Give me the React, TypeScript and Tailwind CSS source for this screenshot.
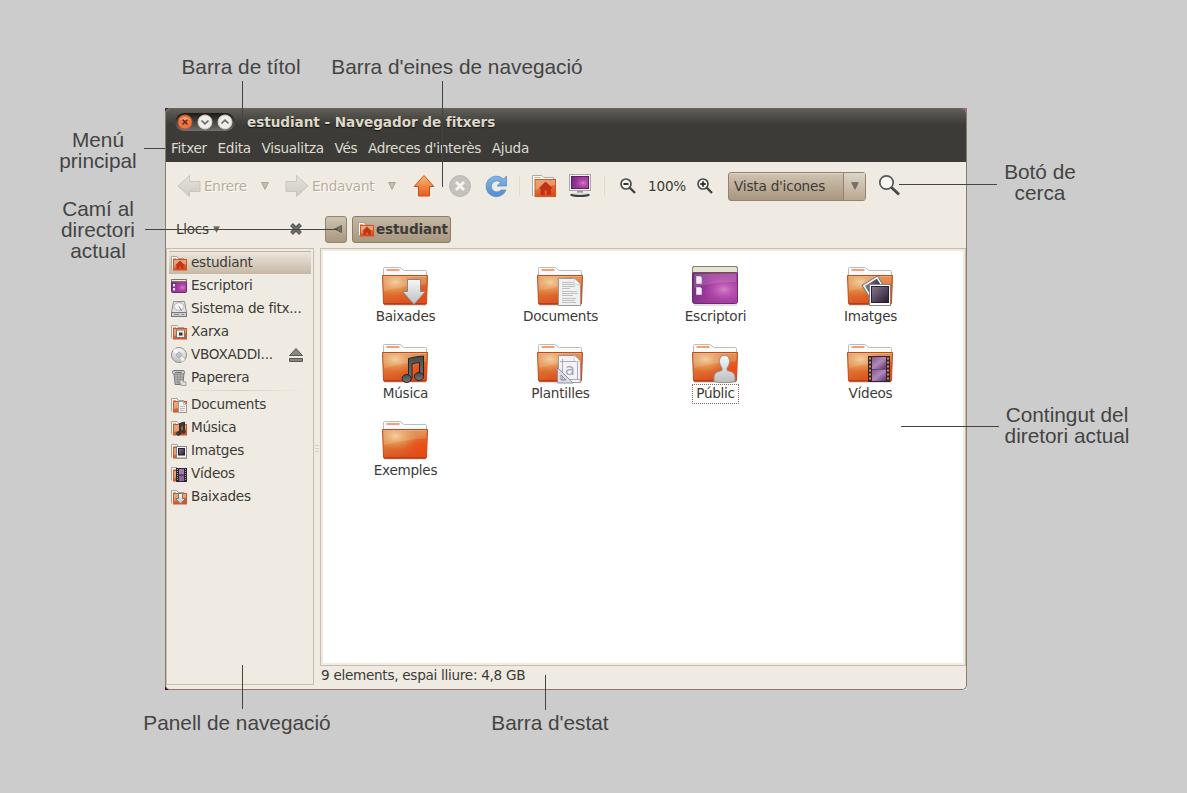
import React from "react";

type Kind =
  | "plain" | "download" | "document" | "desktop" | "images" | "music" | "template" | "public" | "video";

function Defs() {
  return (
    <svg className="absolute h-0 w-0" aria-hidden="true">
      <defs>
        <linearGradient id="front" x1="0" y1="0" x2="0.35" y2="1">
          <stop offset="0" stopColor="#dd8a48" />
          <stop offset="0.5" stopColor="#de7835" />
          <stop offset="1" stopColor="#dc4f1e" />
        </linearGradient>
        <radialGradient id="glow" cx="0.28" cy="0.22" r="0.5">
          <stop offset="0" stopColor="#f3d199" stopOpacity="0.9" />
          <stop offset="1" stopColor="#e59a50" stopOpacity="0" />
        </radialGradient>
        <radialGradient id="hot" cx="0.95" cy="0.65" r="0.5">
          <stop offset="0" stopColor="#ee4a16" />
          <stop offset="1" stopColor="#ee4a16" stopOpacity="0" />
        </radialGradient>
        <linearGradient id="grey" x1="0" y1="0" x2="0" y2="1">
          <stop offset="0" stopColor="#f8f8f8" />
          <stop offset="1" stopColor="#bdbdbd" />
        </linearGradient>
        <linearGradient id="mag" x1="0" y1="0" x2="1" y2="0.2">
          <stop offset="0" stopColor="#6c2a80" />
          <stop offset="0.5" stopColor="#a03a9c" />
          <stop offset="1" stopColor="#a63fa3" />
        </linearGradient>
        <radialGradient id="magGlow" cx="0.7" cy="0.55" r="0.5">
          <stop offset="0" stopColor="#d583c6" />
          <stop offset="1" stopColor="#b13aa8" stopOpacity="0" />
        </radialGradient>
        <linearGradient id="dark" x1="0" y1="0" x2="1" y2="1">
          <stop offset="0" stopColor="#8b7a90" />
          <stop offset="1" stopColor="#241a2c" />
        </linearGradient>
        <linearGradient id="film" x1="0" y1="0" x2="1" y2="1">
          <stop offset="0" stopColor="#7e5b8c" />
          <stop offset="0.5" stopColor="#b287b8" />
          <stop offset="1" stopColor="#5c3274" />
        </linearGradient>
        <linearGradient id="note" x1="0" y1="0" x2="0" y2="1">
          <stop offset="0" stopColor="#4a4a4a" />
          <stop offset="1" stopColor="#777" />
        </linearGradient>
        <linearGradient id="up" x1="0" y1="0" x2="0" y2="1">
          <stop offset="0" stopColor="#f3bd7b" />
          <stop offset="0.5" stopColor="#ef8a45" />
          <stop offset="1" stopColor="#ee5a1d" />
        </linearGradient>
        <linearGradient id="blue" x1="0" y1="0" x2="0" y2="1">
          <stop offset="0" stopColor="#86b5e0" />
          <stop offset="1" stopColor="#4f8fce" />
        </linearGradient>
        <linearGradient id="nav" x1="0" y1="0" x2="0" y2="1">
          <stop offset="0" stopColor="#e6e3dd" />
          <stop offset="1" stopColor="#cdcac4" />
        </linearGradient>
      </defs>
    </svg>
  );
}

function Overlay({ kind }: { kind: Kind }) {
  switch (kind) {
    case "download":
      return <path d="M26.5 14.5h13v12h5L33 39.5 21.5 26.5h5z" fill="url(#grey)" stroke="#868686" />;
    case "document":
      return (
        <g>
          <path d="M22.5 13.5h16l6 6v21h-22z" fill="#f0f0f0" stroke="#999" />
          <path d="M38.5 13.5l-.6 5.6 6.6.4z" fill="#fff" stroke="#bbb" strokeWidth=".7" />
          <path d="M26 17.5h11M26 19.5h12M26 21.5h13M26 23.5h8M26 26.5h15M26 28.5h16M26 30.5h11M26 33.5h14M26 35.5h13M26 37.5h14" stroke="#c0c0c0" />
        </g>
      );
    case "images":
      return (
        <g>
          <g transform="rotate(-32 26 22)">
            <rect x="18.5" y="15.5" width="18" height="17" fill="#f7f7f7" stroke="#777" />
            <rect x="20.5" y="17.5" width="14" height="13" fill="url(#dark)" />
          </g>
          <rect x="23.5" y="19.5" width="21" height="21" fill="#fff" stroke="#858585" />
          <rect x="25.5" y="21.5" width="17" height="16" fill="url(#dark)" stroke="#2a2030" />
        </g>
      );
    case "music":
      return (
        <g stroke="#252525" fill="url(#note)">
          <path d="M27.5 16.5q7-2 15-2.500v20h-4V20.500q-4 .3-7.500 1.500v14.500h-3.500z" />
          <ellipse cx="25.700" cy="36.500" rx="4.600" ry="4" />
          <ellipse cx="38" cy="34.500" rx="4.600" ry="4" />
        </g>
      );
    case "template":
      return (
        <g>
          <path d="M22.5 13.5h16l6 6v21h-22z" fill="#f3f3f4" stroke="#999" />
          <path d="M38.5 13.5l-.6 5.600 6.600.4z" fill="#fff" stroke="#bbb" strokeWidth=".7" />
          <path d="M26.5 17v21M41.500 19v18M24 19.500h16M24 37.500h20" stroke="#a9a9c0" />
          <text x="29" y="33" fontSize="16" fill="#a3a3bc" fontFamily="DejaVu Sans">a</text>
          <path d="M21.5 25.500v15.500H37zM25 33v5h5z" fill="#dcdce6" fillRule="evenodd" stroke="#8f8fa6" />
        </g>
      );
    case "public":
      return (
        <path d="M33.500 13.500c-3.500 0-5 2.700-5 6 0 3 1.500 5 2.500 6.500v2.500c-4 1-8 2-8 7v3.500c2 2.200 19 2.200 21 0v-3.500c0-5-4-6-8-7V26c1-1.500 2.500-3.500 2.500-6.500 0-3.300-1.500-6-5-6z" fill="url(#grey)" stroke="#909090" />
      );
    case "video":
      return (
        <g>
          <rect x="22" y="14" width="22" height="26" fill="#2d282d" />
          <rect x="26" y="15" width="14" height="12" fill="url(#film)" />
          <rect x="26" y="27.500" width="14" height="11.500" fill="url(#film)" />
          <path d="M24 15.500v24M42 15.500v24" stroke="#e48851" strokeWidth="2" strokeDasharray="2 2" />
        </g>
      );
    default:
      return null;
  }
}

function BigIcon({ kind }: { kind: Kind }) {
  if (kind === "desktop") {
    return (
      <svg className="mr-[2px] h-[42px] w-12" viewBox="0 0 48 42">
        <path d="M3 40h43" stroke="#000" strokeOpacity=".12" strokeWidth="2" />
        <rect x="1.500" y="1.500" width="45" height="37" rx="2" fill="url(#mag)" stroke="#6c2a74" />
        <rect x="2" y="8" width="44" height="30" rx="1" fill="url(#magGlow)" />
        <path d="M3 9h42v8C28 17 14 19 3 23z" fill="#fff" opacity=".14" />
        <path d="M1.500 7.500v-4q0-2 2-2h41q2 0 2 2v4z" fill="#e5e4d3" stroke="#85836a" />
        <path d="M2 7.500h44" stroke="#5d5a3c" />
        <path d="M5.500 11.500h4l1 1v6h-5zM5.500 22.500h4l1 1v6h-5z" fill="#f3eef3" stroke="#d9c5dc" />
      </svg>
    );
  }
  return (
    <svg className="mr-[2px] h-[42px] w-12" viewBox="0 0 48 42">
      <path d="M3 40h42" stroke="#000" strokeOpacity=".12" strokeWidth="2" />
      <path d="M2.500 11V3.500q0-1 1-1h15q1.500 0 2.500 1.500 1 1.500 2.500 1.500h21q1 0 1 1V11z" fill="#fbfbfb" stroke="#bcbcbc" />
      <path d="M5.500 5h13" stroke="#f0a275" strokeWidth="2" />
      <path d="M1.500 10.500h45l-1 28q0 .8-1 .8h-41q-1 0-1-1z" fill="url(#front)" stroke="#b74d22" />
      <path d="M1.500 10.500h45l-1 28h-43z" fill="url(#hot)" />
      <path d="M2 11h44l-1 28H3z" fill="url(#glow)" />
      <path d="M2.500 11.500h43l-.3 8C30 20 15 23 3 26z" fill="#fff" opacity=".14" />
      <path d="M2.500 11.500h43" stroke="#f2b788" strokeOpacity=".7" />
      <path d="M3 38.700h42" stroke="#b63812" />
      <Overlay kind={kind} />
    </svg>
  );
}

type Small = "home" | "desktop" | "disk" | "network" | "cd" | "trash" | "document" | "music" | "images" | "video" | "download";

function SmallIcon({ kind }: { kind: Small }) {
  if (kind === "desktop")
    return (
      <svg className="size-4 shrink-0" viewBox="0 0 16 16">
        <rect x=".5" y="1.500" width="15" height="13" rx="1" fill="url(#mag)" stroke="#6c2a74" />
        <rect x="3" y="4" width="12" height="10" fill="url(#magGlow)" />
        <path d="M.5 3.500v-2h15v2z" fill="#eceade" stroke="#7c7a5f" />
        <path d="M2 6h2v2.500H2zM2 10h2v2.500H2z" fill="#f3e6f3" />
      </svg>
    );
  if (kind === "disk")
    return (
      <svg className="size-4 shrink-0" viewBox="0 0 16 16">
        <path d="M2.500.5h11l2 11v4H.5v-4z" fill="#e2e2e2" stroke="#8d8d8d" />
        <ellipse cx="8" cy="5.500" rx="5" ry="3.800" fill="#f5f5f5" stroke="#b4b4b4" />
        <path d="M8 5.500l2.500 4.500" stroke="#888" />
        <path d="M.5 11.500h15v4H.5z" fill="#cdcdcd" stroke="#777" />
        <path d="M3 13.500h5M10.500 13.500h2.500" stroke="#8a8a8a" />
      </svg>
    );
  if (kind === "cd")
    return (
      <svg className="size-4 shrink-0" viewBox="0 0 16 16">
        <circle cx="8" cy="8" r="7.500" fill="url(#grey)" stroke="#8f8f8f" />
        <path d="M8 8L2 4a7 7 0 013-3zM8 8l6 4a7 7 0 01-3 3z" fill="#fff" opacity=".75" />
        <circle cx="8" cy="8" r="2.300" fill="#e5e5e5" stroke="#999" />
        <circle cx="8" cy="8" r=".8" fill="#888" />
      </svg>
    );
  if (kind === "trash")
    return (
      <svg className="size-4 shrink-0" viewBox="0 0 16 16">
        <path d="M3 3.500l1.200 11h7.600l1.200-11z" fill="#b5b7b7" stroke="#777" />
        <path d="M4 7h8M4.500 9.500h7M5 12h6M6.500 5l.5 9M9.500 5l-.5 9" stroke="#8a8c8c" strokeWidth=".8" />
        <rect x="1.500" y=".5" width="12" height="3.500" rx="1.500" fill="#d6d6d6" stroke="#777" />
        <path d="M4 2.300h7" stroke="#666" />
        <path d="M8.500 10.500l2.500-1 1 2 3 .5v3.500h-5z" fill="#ddd" stroke="#888" strokeWidth=".7" />
      </svg>
    );
  return (
    <svg className="size-4 shrink-0" viewBox="0 0 16 16">
      <path d="M.5 14.500V1.500h5.500l1 2h6v3" fill="#fff" stroke="#a3a3a3" />
      <path d="M2 3.500h3" stroke="#f0a275" />
      <rect x="2.500" y="4.500" width="13" height="10.500" fill="url(#front)" stroke="#cf5426" />
      <path d="M3 5h12v4L3 12z" fill="#fff" opacity=".3" />
      {kind === "home" && <path d="M9 5.500L4 10.500h1.500V14H8v-2.500h2V14h2.500v-3.500H14z" fill="#c2331a" />}
      {kind === "network" && (
        <g>
          <rect x="5.500" y="6" width="8" height="7.500" fill="#eee" stroke="#777" />
          <rect x="8" y="8.500" width="3.500" height="3" fill="#333" />
        </g>
      )}
      {kind === "document" && (
        <g>
          <path d="M7.500 4.500h5l3 3v8h-8z" fill="#f1f1f1" stroke="#999" />
          <path d="M12.500 4.500v3h3M9 9.500h5M9 11.500h5M9 13.500h4" stroke="#bbb" fill="none" />
        </g>
      )}
      {kind === "music" && (
        <g fill="#3b3b3b" stroke="#333">
          <path d="M8.500 3.500l5-1.500v10h-1.500V5.500l-2 .5v8h-1.500z" />
          <circle cx="7.500" cy="13.500" r="1.800" />
          <circle cx="12.500" cy="11.700" r="1.600" />
        </g>
      )}
      {kind === "images" && (
        <g>
          <rect x="5.500" y="3.500" width="10" height="11.500" fill="#f7f7f7" stroke="#858585" />
          <rect x="7.500" y="5.500" width="6" height="6.500" fill="url(#dark)" stroke="#2a2030" />
        </g>
      )}
      {kind === "video" && (
        <g>
          <rect x="5" y="2" width="11" height="14" fill="#2b262b" />
          <rect x="8" y="3" width="5" height="5.500" fill="#a57aac" />
          <rect x="8" y="9.500" width="5" height="5.500" fill="#8f62a0" />
          <path d="M6.500 3v12M14.500 3v12" stroke="#aaa0a8" strokeDasharray="1 1" />
        </g>
      )}
      {kind === "download" && <path d="M7.500 4.500h4v5h3L9.500 15 4.500 9.500h3z" fill="url(#grey)" stroke="#777" />}
    </svg>
  );
}

const places: { icon: Small; label: string }[] = [
  { icon: "home", label: "estudiant" },
  { icon: "desktop", label: "Escriptori" },
  { icon: "disk", label: "Sistema de fitx..." },
  { icon: "network", label: "Xarxa" },
  { icon: "cd", label: "VBOXADDI..." },
  { icon: "trash", label: "Paperera" },
];

const bookmarks: { icon: Small; label: string }[] = [
  { icon: "document", label: "Documents" },
  { icon: "music", label: "Música" },
  { icon: "images", label: "Imatges" },
  { icon: "video", label: "Vídeos" },
  { icon: "download", label: "Baixades" },
];

const files: { kind: Kind; label: string }[] = [
  { kind: "download", label: "Baixades" },
  { kind: "document", label: "Documents" },
  { kind: "desktop", label: "Escriptori" },
  { kind: "images", label: "Imatges" },
  { kind: "music", label: "Música" },
  { kind: "template", label: "Plantilles" },
  { kind: "public", label: "Públic" },
  { kind: "video", label: "Vídeos" },
  { kind: "plain", label: "Exemples" },
];

function Place({ icon, label, active }: { icon: Small; label: string; active?: boolean }) {
  return (
    <div
      className={
        active
          ? "flex h-[23px] items-center border-t border-[#c4b5a0] bg-linear-to-b from-[#ece6dd] to-[#c6b8a5] pb-px pl-0.5"
          : "flex h-[23px] items-center pl-0.5"
      }
    >
      <SmallIcon kind={icon} />
      <span className="mb-0.5 ml-1 flex-1 whitespace-nowrap">{label}</span>
      {icon === "cd" && (
        <svg className="mr-[7px] h-4 w-4" viewBox="0 0 16 16">
          <path d="M8 1.500l6.500 7h-13zM1.500 11.500h13v3h-13z" fill="#858580" stroke="#5a5a56" />
        </svg>
      )}
    </div>
  );
}

function TitleBar() {
  return (
    <div className="flex h-[26px] items-center bg-linear-to-b from-[#605e57] to-[#3c3b37] to-60% pl-[9px]">
      <div className="flex h-[18px] w-[60px] items-center justify-center gap-1 rounded-full bg-linear-to-b from-[#1c1b19] to-[#73716b]">
        <svg className="size-4" viewBox="0 0 16 16">
          <circle cx="8" cy="8" r="7" fill="#f0743f" stroke="#c9562c" />
          <path d="M3 6a5.500 4.500 0 0110 0" fill="#f9a37c" />
          <path d="M5.500 5.500l5 5M10.500 5.500l-5 5" stroke="#5b2d1b" strokeWidth="1.500" />
        </svg>
        <svg className="size-4" viewBox="0 0 16 16">
          <circle cx="8" cy="8" r="7" fill="#f0ede6" stroke="#d2cec5" />
          <path d="M4.500 6.500L8 9.800l3.500-3.300" fill="none" stroke="#6a6862" strokeWidth="1.700" />
        </svg>
        <svg className="size-4" viewBox="0 0 16 16">
          <circle cx="8" cy="8" r="7" fill="#f0ede6" stroke="#d2cec5" />
          <path d="M4.500 9.500L8 6.200l3.500 3.300" fill="none" stroke="#6a6862" strokeWidth="1.700" />
        </svg>
      </div>
      <span className="mb-px ml-3 whitespace-nowrap text-[13.6px] font-bold tracking-[-0.05px] text-[#dfd8c8] [text-shadow:0_1px_1px_#111]">
        estudiant - Navegador de fitxers
      </span>
    </div>
  );
}

function MenuBar() {
  return (
    <div className="flex h-[27px] items-center gap-[10.6px] whitespace-nowrap bg-[#3c3b37] pb-0.5 pl-[5px] text-[#dfdbd2]">
      <span>Fitxer</span>
      <span>Edita</span>
      <span>Visualitza</span>
      <span>Vés</span>
      <span>Adreces d'interès</span>
      <span>Ajuda</span>
    </div>
  );
}

function Caret({ className }: { className: string }) {
  return (
    <svg className={className} viewBox="0 0 8 8">
      <path d="M.5.500h7L4 7.500z" fill="currentColor" stroke="#0003" />
    </svg>
  );
}

function Toolbar() {
  const disabled = "whitespace-nowrap text-[#b9ad9a] [text-shadow:1px_1px_0_#fff]";
  return (
    <div className="flex h-12 items-center">
      <svg className="ml-[11px] h-6 w-6" viewBox="0 0 24 24">
        <path d="M1 12L12.500 1.500v6H23v10H12.500v5z" fill="url(#nav)" stroke="#c9c4bc" />
      </svg>
      <span className={`${disabled} ml-[3px] w-[57px]`}>Enrere</span>
      <Caret className="size-2 text-[#c9bda9]" />
      <svg className="ml-4 h-6 w-6" viewBox="0 0 24 24">
        <path d="M23 12L11.500 1.500v6H1v10h10.500v5z" fill="url(#nav)" stroke="#c9c4bc" />
      </svg>
      <span className={`${disabled} ml-[3px] w-[76px]`}>Endavant</span>
      <Caret className="size-2 text-[#c9bda9]" />
      <svg className="ml-4 size-6" viewBox="0 0 24 24">
        <path d="M12 1.500l9.800 11h-4.300v9.500h-11v-9.500H2.200z" fill="url(#up)" stroke="#c8501f" />
      </svg>
      <svg className="ml-3 size-6" viewBox="0 0 24 24">
        <circle cx="12" cy="12" r="10.500" fill="#c4c1bc" stroke="#b8b5b0" />
        <path d="M8 8l8 8M16 8l-8 8" stroke="#f5f3ef" strokeWidth="3" />
      </svg>
      <svg className="ml-3 size-6" viewBox="0 0 24 24">
        <path d="M22.500 2v10h-9.500l3.600-3.600a5.500 5.500 0 10.4 7.600h5a10.300 10.300 0 11-2.500-11z" fill="url(#blue)" stroke="#5b91c5" strokeWidth=".8" />
      </svg>
      <div className="ml-[11px] h-5 w-px bg-[#e0d9cc]" />
      <svg className="ml-3 size-6" viewBox="0 0 24 24">
        <path d="M.5 22V1.500h9l2 2h10V6" fill="#fff" stroke="#a9a9a9" />
        <path d="M2.500 3.500h6" stroke="#f0a275" />
        <rect x="3" y="5.500" width="20.500" height="17" fill="url(#front)" stroke="#cf5426" />
        <path d="M3.500 6H23v5C15 11.500 9 14 3.500 16z" fill="#fff" opacity=".25" />
        <path d="M13.500 7.500L6.500 14.500h2v6.500h4v-4.500H15V21h4v-6.500h2z" fill="#bf311a" />
      </svg>
      <svg className="ml-3 size-6" viewBox="0 0 24 24">
        <path d="M9 17h6v3H9z" fill="#9a9a9a" />
        <ellipse cx="12" cy="21" rx="10" ry="2" fill="#3e4040" />
        <ellipse cx="12" cy="19.700" rx="8" ry="1.300" fill="#dedede" />
        <rect x="1.500" y=".5" width="21" height="16" fill="#f3f3f3" stroke="#a8a8a8" />
        <rect x="3.500" y="2.500" width="17" height="12" fill="url(#mag)" stroke="#5a2260" />
        <rect x="4" y="3" width="16" height="11" fill="url(#magGlow)" />
      </svg>
      <div className="ml-3 h-5 w-px bg-[#e0d9cc]" />
      <svg className="ml-[15px] size-4" viewBox="0 0 16 16">
        <path d="M9.500 9.500l5.500 5.500" stroke="#454545" strokeWidth="2.400" />
        <circle cx="6" cy="6" r="5" fill="#f6f5f2" stroke="#4a4a4a" strokeWidth="1.700" />
        <path d="M3.500 6h5" stroke="#333" strokeWidth="1.800" />
      </svg>
      <span className="ml-3 w-[37px] whitespace-nowrap tracking-[-0.2px]">100%</span>
      <svg className="ml-3 size-4" viewBox="0 0 16 16">
        <path d="M9.500 9.500l5.500 5.500" stroke="#454545" strokeWidth="2.400" />
        <circle cx="6" cy="6" r="5" fill="#f6f5f2" stroke="#4a4a4a" strokeWidth="1.700" />
        <path d="M3.300 6h5.400M6 3.300v5.400" stroke="#333" strokeWidth="1.800" />
      </svg>
      <div className="ml-[15px] flex h-[29px] w-[138px] items-center rounded-[3px] border border-[#94836e] bg-linear-to-b from-[#cfc3b1] to-[#a9977f] shadow-[inset_0_1px_0_#ddd2c3]">
        <span className="flex-1 whitespace-nowrap pl-[5px] tracking-[-0.2px]">Vista d'icones</span>
        <div className="flex h-full w-[22px] items-center justify-center border-l border-[#94836e] bg-linear-to-b from-[#ddd4c7] to-[#b9a892]">
          <Caret className="size-2 text-[#77716a]" />
        </div>
      </div>
      <svg className="ml-3 size-6" viewBox="0 0 24 24">
        <path d="M13 13l8 7.500" stroke="#454648" strokeWidth="2.800" />
        <circle cx="8.500" cy="8.500" r="6.700" fill="#f8f7f4" stroke="#55565a" strokeWidth="1.700" />
      </svg>
    </div>
  );
}

function LocationBar() {
  return (
    <div className="flex h-[38px] items-center">
      <span className="ml-[10px] whitespace-nowrap">Llocs</span>
      <Caret className="ml-1 size-[7px] text-[#6d6b66]" />
      <div className="flex-1" />
      <svg className="mr-[22px] size-[14px]" viewBox="0 0 14 14">
        <path d="M2.500 2.500l9 9M11.500 2.500l-9 9" stroke="#555652" strokeWidth="4" />
        <path d="M3 3l8 8M11 3l-8 8" stroke="#767773" strokeWidth="1.500" />
      </svg>
      <div className="flex w-[641px] items-center gap-[5px]">
        <div className="flex h-[27px] w-[22px] items-center justify-center rounded-[3px] border border-[#94836e] bg-linear-to-b from-[#cfc3b1] to-[#a9977f]">
          <svg className="ml-1 size-2" viewBox="0 0 8 8">
            <path d="M7.500.500v7L.5 4z" fill="#77716a" stroke="#55504a" strokeWidth=".8" />
          </svg>
        </div>
        <div className="flex h-[27px] w-[99px] items-center rounded-[3px] border border-[#8d7c68] bg-linear-to-b from-[#c5b7a3] to-[#a9977f] pl-[5px] font-bold tracking-[-0.15px]">
          <SmallIcon kind="home" />
          <span className="ml-[2px] whitespace-nowrap">estudiant</span>
        </div>
      </div>
    </div>
  );
}

function Window() {
  return (
    <div className="flex h-[582px] w-[802px] flex-col overflow-hidden rounded-[5px] border border-[#8b7c66] border-t-[#6b6455] bg-[#efebe3] font-['DejaVu_Sans',sans-serif] text-[13.6px] leading-[16px] tracking-[-0.27px] text-[#3c3b37]">
      <TitleBar />
      <MenuBar />
      <Toolbar />
      <LocationBar />
      <div className="flex flex-1">
        <div className="mb-1 w-[148px] border border-[#cbbda7] p-[2px]">
          {places.map((p, i) => (
            <Place key={p.label} icon={p.icon} label={p.label} active={i === 0} />
          ))}
          <div className="mx-1 mb-0.5 mt-[1px] h-px bg-linear-to-r from-transparent via-[#d8cfc0] to-transparent" />
          {bookmarks.map((p) => (
            <Place key={p.label} icon={p.icon} label={p.label} />
          ))}
        </div>
        <div className="flex w-[6px] flex-col items-center justify-center gap-0.5 pb-[40px]">
          <div className="h-px w-1 bg-[#d8cfc0]" />
          <div className="h-px w-1 bg-[#d8cfc0]" />
          <div className="h-px w-1 bg-[#d8cfc0]" />
        </div>
        <div className="flex flex-1 flex-col">
          <div className="h-[418px] border border-[#cbbda7] p-[2px]">
            <div className="grid h-full grid-cols-[repeat(4,155px)] content-start bg-white pl-[5px] pt-[14px]">
              {files.map((f) => (
                <div key={f.label} className="flex h-[77px] flex-col items-center">
                  <BigIcon kind={f.kind} />
                  <span
                    className={
                      f.kind === "public"
                        ? "border border-dotted border-[#8c6a60] px-[3.5px] pb-0.5"
                        : "mt-px whitespace-nowrap"
                    }
                  >
                    {f.label}
                  </span>
                </div>
              ))}
            </div>
          </div>
          <div className="flex flex-1 items-center whitespace-nowrap pb-[5px] pl-px tracking-[-0.29px]">
            9 elements, espai lliure: 4,8 GB
          </div>
        </div>
      </div>
    </div>
  );
}

const notes = [
  { text: "Barra de títol", pos: "left-[141px] top-[56px] w-[200px]" },
  { text: "Barra d'eines de navegació", pos: "left-[307px] top-[56px] w-[300px]" },
  { text: "Menú\nprincipal", pos: "left-[38px] top-[129px] w-[120px]" },
  { text: "Camí al\ndirectori\nactual", pos: "left-[38px] top-[198px] w-[120px]" },
  { text: "Botó de\ncerca", pos: "left-[980px] top-[161px] w-[120px]" },
  { text: "Contingut del\ndiretori actual", pos: "left-[987px] top-[404px] w-[160px]" },
  { text: "Panell de navegació", pos: "left-[137px] top-[712px] w-[200px]" },
  { text: "Barra d'estat", pos: "left-[450px] top-[712px] w-[200px]" },
];

const pointers = [
  "left-[242px] top-[81px] h-[44px] w-px",
  "left-[442px] top-[81px] h-[106px] w-px",
  "left-[144px] top-[148px] h-px w-[21px]",
  "left-[145px] top-[229px] h-px w-[193px]",
  "left-[899px] top-[184px] h-px w-[98px]",
  "left-[901px] top-[426px] h-px w-[98px]",
  "left-[242px] top-[665px] h-[44px] w-px",
  "left-[545px] top-[675px] h-[35px] w-px",
];

export default function App() {
  return (
    <div className="relative h-[793px] w-[1187px] overflow-hidden bg-[#cccccc] pl-[165px] pt-[108px]">
      <Defs />
      <div className="w-[802px] bg-[linear-gradient(#4a1d47,#4a1d47),linear-gradient(#b5608f,#b5608f),linear-gradient(#2a1028,#2a1028),linear-gradient(#e5e0e0,#e5e0e0)] bg-[size:5px_5px] bg-[position:0_0,100%_0,0_100%,100%_100%] bg-no-repeat">
        <Window />
      </div>
      {pointers.map((p) => (
        <div key={p} className={`absolute bg-[#444] ${p}`} />
      ))}
      {notes.map((n) => (
        <div
          key={n.text}
          className={`absolute whitespace-pre text-center font-['Liberation_Sans',sans-serif] text-[20.8px] leading-[21px] text-[#444] ${n.pos}`}
        >
          {n.text}
        </div>
      ))}
    </div>
  );
}
